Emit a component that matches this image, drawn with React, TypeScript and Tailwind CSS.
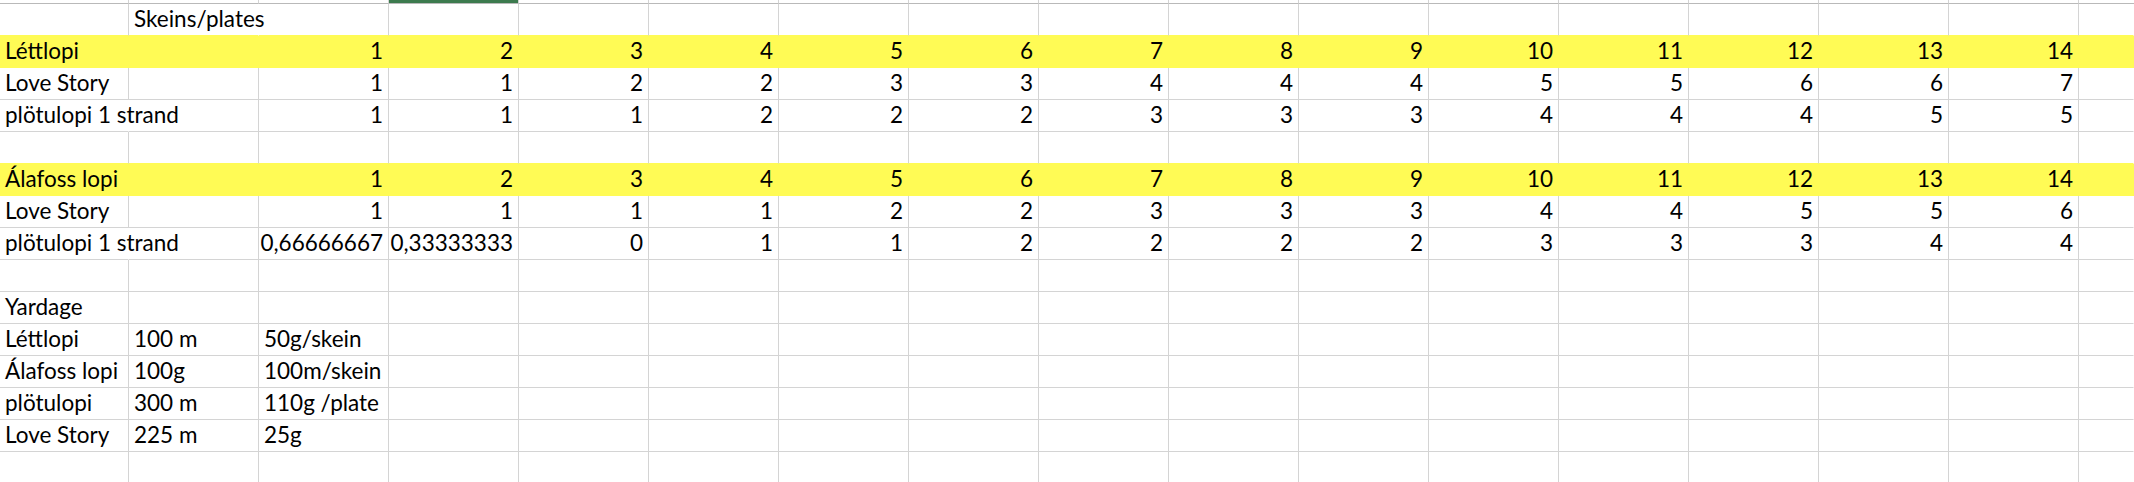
import React from 'react';

type Cell = string | number;

interface Row {
  cells: Cell[];
  yellow?: boolean;
}

const YELLOW = 'bg-[#fffb55]';

// numbers are in columns C..P, so two leading cells (label + empty B)
const seq = (label: string, nums: Cell[]): Cell[] => [label, '', ...nums];

const rows: Row[] = [
  { cells: ['', 'Skeins/plates'] },
  { cells: seq('Léttlopi', [1, 2, 3, 4, 5, 6, 7, 8, 9, 10, 11, 12, 13, 14]), yellow: true },
  { cells: seq('Love Story', [1, 1, 2, 2, 3, 3, 4, 4, 4, 5, 5, 6, 6, 7]) },
  { cells: seq('plötulopi 1 strand', [1, 1, 1, 2, 2, 2, 3, 3, 3, 4, 4, 4, 5, 5]) },
  { cells: [] },
  { cells: seq('Álafoss lopi', [1, 2, 3, 4, 5, 6, 7, 8, 9, 10, 11, 12, 13, 14]), yellow: true },
  { cells: seq('Love Story', [1, 1, 1, 1, 2, 2, 3, 3, 3, 4, 4, 5, 5, 6]) },
  { cells: seq('plötulopi 1 strand', ['0,66666667', '0,33333333', 0, 1, 1, 2, 2, 2, 2, 3, 3, 3, 4, 4]) },
  { cells: [] },
  { cells: ['Yardage'] },
  { cells: ['Léttlopi', '100 m', '50g/skein'] },
  { cells: ['Álafoss lopi', '100g', '100m/skein'] },
  { cells: ['plötulopi', '300 m', '110g /plate'] },
  { cells: ['Love Story', '225 m', '25g'] },
  { cells: [] },
];

const COLS = 17; // A + B..P + partial Q

const widthClass = (c: number) =>
  c === 0 ? 'w-[129px]' : c === COLS - 1 ? 'flex-1' : 'w-[130px]';

// text that spills over the next cell hides that gridline, like Excel does
const spills = (row: Row, c: number) => {
  const v = row.cells[c];
  if (typeof v !== 'string') return false;
  if (row.cells[c + 1] !== undefined && row.cells[c + 1] !== '') return false;
  return v === 'Skeins/plates' || v === 'plötulopi 1 strand';
};

function SheetRow({ row, nextYellow, last }: { row: Row; nextYellow: boolean; last: boolean }) {
  const rowBorder = last
    ? 'border-b-0'
    : row.yellow || nextYellow
    ? 'border-b border-b-[#fffb55]'
    : 'border-b border-b-[#d4d4d4]';

  return (
    <div className={`flex ${last ? 'h-[30px]' : 'h-[32px]'} ${row.yellow ? YELLOW : ''}`}>
      {Array.from({ length: COLS }).map((_, c) => {
        const v = row.cells[c];
        const isNum = typeof v === 'number' || (typeof v === 'string' && /^\d+,\d+$/.test(v));
        const hideRight = row.yellow || spills(row, c) || c === COLS - 1;
        return (
          <div
            key={c}
            className={`${widthClass(c)} shrink-0 ${rowBorder} ${
              hideRight ? 'border-r border-r-transparent' : 'border-r border-r-[#d4d4d4]'
            } flex items-end pb-[5px] ${isNum ? 'justify-end pr-[5px]' : 'pl-[5px]'} overflow-visible relative`}
          >
            {v !== undefined && v !== '' && (
              <span className="whitespace-nowrap leading-[22px] relative z-10">{v}</span>
            )}
          </div>
        );
      })}
    </div>
  );
}

export default function App() {
  return (
    <div
      className="w-[2134px] h-[482px] overflow-hidden bg-white text-black text-[22.5px]"
      style={{ fontFamily: 'Lato, "Liberation Sans", sans-serif' }}
    >
      {/* sliver of the row above + its bottom edge */}
      <div className="flex h-[4px]">
        {Array.from({ length: COLS }).map((_, c) => (
          <div
            key={c}
            className={`${widthClass(c)} shrink-0 border-b border-b-[#b9b9b9] ${
              c === COLS - 1 ? '' : 'border-r border-r-[#d4d4d4]'
            }`}
          >
            {c === 3 && <div className="h-[3px] bg-[#3c7a4e]" />}
          </div>
        ))}
      </div>
      {rows.map((row, i) => (
        <SheetRow
          key={i}
          row={row}
          nextYellow={!!rows[i + 1]?.yellow}
          last={i === rows.length - 1}
        />
      ))}
    </div>
  );
}
